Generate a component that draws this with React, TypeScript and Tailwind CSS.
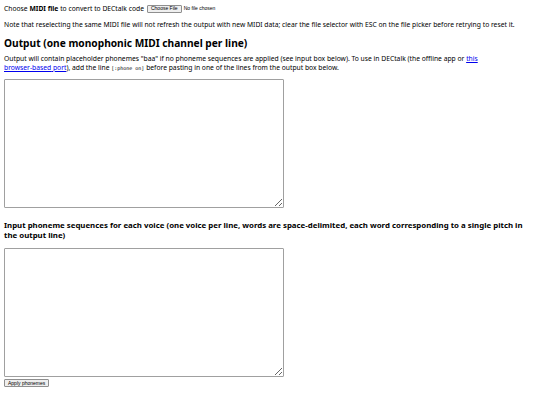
export default function App() {
  return (
    <div className="w-[540px] h-[405px] bg-white text-black px-[4px] pt-[4px] text-[6.75px] leading-[9px] font-['Noto_Sans',sans-serif] overflow-hidden">
      <div className="flex items-center h-[9px]">
        <span>
          Choose <b>MIDI file</b> to convert to DECtalk code
        </span>
        <span className="ml-[3px] border border-[#8f8f8f] bg-[#efefef] rounded-[1px] px-[3px] h-[8px] flex items-center text-[5px] font-['Liberation_Sans',sans-serif]">
          Choose File
        </span>
        <span className="ml-[2px] text-[5px] font-['Liberation_Sans',sans-serif]">No file chosen</span>
      </div>
      <p className="mt-[7px]">
        Note that reselecting the same MIDI file will not refresh the output with new MIDI data; clear the file selector
        with ESC on the file picker before retrying to reset it.
      </p>
      <h3 className="mt-[8px] text-[10.2px] leading-[12px] font-bold">Output (one monophonic MIDI channel per line)</h3>
      <p className="mt-[5px] w-[521px]">
        Output will contain placeholder phonemes "baa" if no phoneme sequences are applied (see input box below). To use
        in DECtalk (the offline app or{' '}
        <a href="#" className="text-[#0000ee] underline">
          this <span className="whitespace-nowrap">browser-based</span> port
        </a>
        ), add the line <code className="font-['DejaVu_Sans_Mono',monospace] text-[5px] leading-none">[:phone on]</code>{' '}
        before pasting in one of the lines from the output box below.
      </p>
      <textarea className="block mt-[7px] w-[280px] h-[129px] border border-[#a0a0a0] rounded-[1px] resize-y" />
      <h3 className="mt-[12px] text-[7.85px] leading-[10px] font-bold">
        Input phoneme sequences for each voice (one voice per line, words are space-delimited, each word corresponding to
        a single pitch in the output line)
      </h3>
      <textarea className="block mt-[8px] w-[280px] h-[129px] border border-[#a0a0a0] rounded-[1px] resize-y" />
      <button className="block mt-[2px] border border-[#8f8f8f] bg-[#efefef] rounded-[1px] px-[3px] h-[8px] text-[5px] leading-[6px] font-['Liberation_Sans',sans-serif]">
        Apply phonemes
      </button>
    </div>
  );
}
